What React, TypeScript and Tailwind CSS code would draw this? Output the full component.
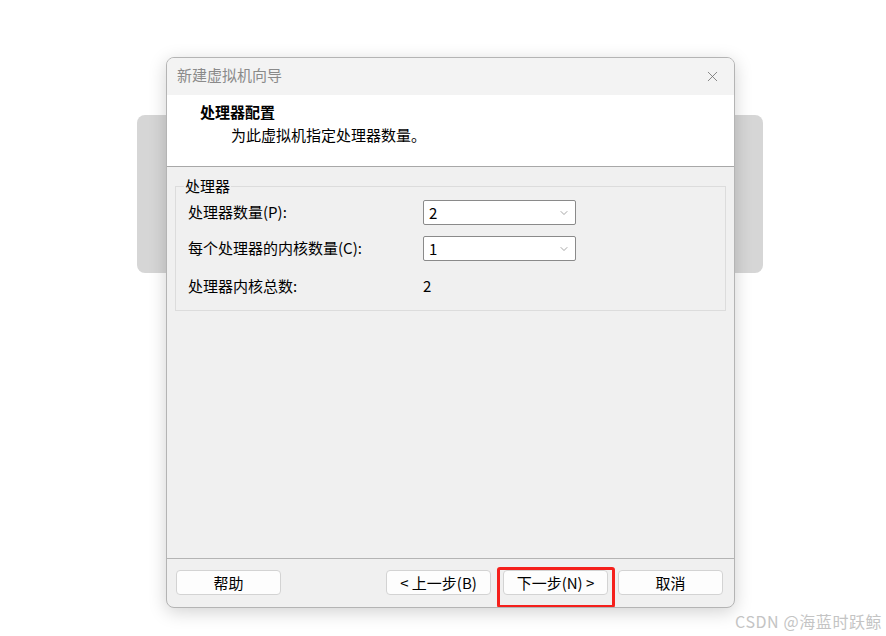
import { X, ChevronDown } from 'lucide-react';

const font = { fontFamily: '"Noto Sans CJK SC", "Liberation Sans", sans-serif' };

function Select({ value }: { value: string }) {
  return (
    <div className="flex h-[25px] w-[153px] items-center justify-between rounded-[2px] border border-[#8a8a8a] bg-white pl-[5px] pr-[5px]">
      <span className="text-[15px] leading-none text-black">{value}</span>
      <ChevronDown className="h-[12px] w-[12px] text-[#6a6a6a]" strokeWidth={1.2} />
    </div>
  );
}

function Button({ label }: { label: string }) {
  return (
    <button className="flex h-[25px] w-[105px] items-center justify-center rounded-[4px] border border-[#d3d3d3] bg-[#fdfdfd] text-[15px] leading-none text-black">
      {label}
    </button>
  );
}

export default function App() {
  return (
    <div className="relative h-[636px] w-[886px] overflow-hidden bg-white" style={font}>
      {/* window behind */}
      <div className="absolute left-[137px] top-[115px] h-[158px] w-[626px] rounded-[8px] bg-[#d6d6d6]" />

      {/* wizard dialog */}
      <div className="absolute left-[166px] top-[57px] flex h-[551px] w-[569px] flex-col overflow-hidden rounded-[8px] border border-[#b4b4b4] bg-[#f0f0f0] shadow-[0_4px_18px_rgba(0,0,0,0.18)]">
        <div className="flex h-[37px] shrink-0 items-center justify-between bg-[#f3f3f3] pl-[10px] pr-[13px]">
          <span className="mt-[-2px] text-[15px] text-[#8a8a8a]">新建虚拟机向导</span>
          <X className="h-[17px] w-[17px] text-[#6a6a6a]" strokeWidth={1.1} />
        </div>

        <div className="flex h-[72px] shrink-0 flex-col border-b border-[#a8a8a8] bg-white pl-[33px] pt-[7px]">
          <span className="text-[15px] font-bold leading-[20px] text-black">处理器配置</span>
          <span className="mt-[3px] pl-[31px] text-[15px] leading-[20px] text-black">为此虚拟机指定处理器数量。</span>
        </div>

        <div className="flex-1 px-[8px] pt-[19px]">
          <div className="relative h-[125px] border border-[#dcdcdc] pl-[12px] pt-[13px]">
            <span className="absolute left-[8px] top-[-11px] bg-[#f0f0f0] px-[1px] text-[15px] leading-[20px] text-black">处理器</span>
            <div className="flex flex-col gap-[11px]">
              <div className="flex h-[25px] items-center">
                <span className="w-[235px] text-[15px] text-black">处理器数量(P):</span>
                <Select value="2" />
              </div>
              <div className="flex h-[25px] items-center">
                <span className="w-[235px] text-[15px] text-black">每个处理器的内核数量(C):</span>
                <Select value="1" />
              </div>
              <div className="mt-[2px] flex h-[25px] items-center">
                <span className="w-[235px] text-[15px] text-black">处理器内核总数:</span>
                <span className="text-[15px] text-black">2</span>
              </div>
            </div>
          </div>
        </div>

        <div className="flex h-[49px] shrink-0 items-start border-t border-[#b4b4b4] pl-[9px] pr-[11px] pt-[11px]">
          <Button label="帮助" />
          <div className="ml-auto flex">
            <Button label="< 上一步(B)" />
            <div className="relative ml-[12px]">
              <Button label="下一步(N) >" />
              <div className="absolute left-[-6px] top-[-3px] h-[41px] w-[118px] rounded-[3px] border-[3px] border-[#f5201c]" />
            </div>
            <div className="ml-[10px]">
              <Button label="取消" />
            </div>
          </div>
        </div>
      </div>

      <span className="absolute left-[735px] top-[609px] text-[16px] tracking-[0.6px] text-[#c4c4c4]">CSDN @海蓝时跃鲸</span>
    </div>
  );
}
